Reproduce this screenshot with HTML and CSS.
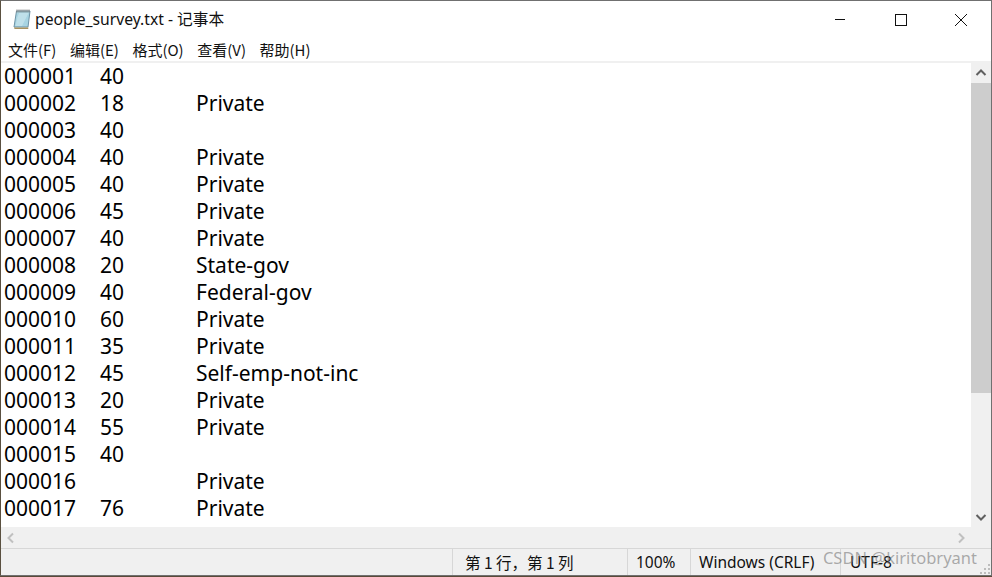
FILE: index.html
```html
<!DOCTYPE html>
<html lang="zh">
<head>
<meta charset="utf-8">
<title>people_survey.txt - 记事本</title>
<link rel="stylesheet" href="styles.css">
</head>
<body>
<div class="window">
  <header class="titlebar">
    <svg class="app-icon" width="20" height="22" viewBox="0 0 20 22">
      <path d="M4.5 3 H18 L16 19 H2 Z" fill="#a8d4e2" stroke="#6d93a6" stroke-width="1"/>
      <path d="M5.5 9 L3.5 18 H10 L16.5 5 H7 Z" fill="#c9e6ee" opacity=".7"/>
      <path d="M2 19.5 H16.5 L16.2 21 H2.6 Z" fill="#a8925f"/>
      <path d="M4.5 3 H18" stroke="#7d7d7d" stroke-width="3" stroke-dasharray="1 1"/>
    </svg>
    <span class="title">people_survey.txt - 记事本</span>
    <div class="controls">
      <svg class="ctl" width="46" height="36" viewBox="0 0 46 36"><path d="M17 18.5 H27" stroke="#111" fill="none"/></svg>
      <svg class="ctl" width="46" height="36" viewBox="0 0 46 36"><rect x="17.5" y="13.5" width="11" height="11" stroke="#111" fill="none"/></svg>
      <svg class="ctl" width="46" height="36" viewBox="0 0 46 36"><path d="M17 13 L29 25 M29 13 L17 25" stroke="#111" fill="none"/></svg>
    </div>
  </header>
  <nav class="menubar">
    <span>文件(F)</span><span>编辑(E)</span><span>格式(O)</span><span>查看(V)</span><span>帮助(H)</span>
  </nav>
  <div class="client">
    <main class="editor">
      <div class="row"><span>000001</span><span>40</span><span></span></div>
      <div class="row"><span>000002</span><span>18</span><span>Private</span></div>
      <div class="row"><span>000003</span><span>40</span><span></span></div>
      <div class="row"><span>000004</span><span>40</span><span>Private</span></div>
      <div class="row"><span>000005</span><span>40</span><span>Private</span></div>
      <div class="row"><span>000006</span><span>45</span><span>Private</span></div>
      <div class="row"><span>000007</span><span>40</span><span>Private</span></div>
      <div class="row"><span>000008</span><span>20</span><span>State-gov</span></div>
      <div class="row"><span>000009</span><span>40</span><span>Federal-gov</span></div>
      <div class="row"><span>000010</span><span>60</span><span>Private</span></div>
      <div class="row"><span>000011</span><span>35</span><span>Private</span></div>
      <div class="row"><span>000012</span><span>45</span><span>Self-emp-not-inc</span></div>
      <div class="row"><span>000013</span><span>20</span><span>Private</span></div>
      <div class="row"><span>000014</span><span>55</span><span>Private</span></div>
      <div class="row"><span>000015</span><span>40</span><span></span></div>
      <div class="row"><span>000016</span><span></span><span>Private</span></div>
      <div class="row"><span>000017</span><span>76</span><span>Private</span></div>
    </main>
    <aside class="vscroll">
      <svg width="20" height="20" viewBox="0 0 20 20"><path d="M5.5 12 L10 7.5 L14.5 12" stroke="#606060" stroke-width="2" fill="none"/></svg>
      <div class="track"><div class="thumb"></div></div>
      <svg width="20" height="20" viewBox="0 0 20 20"><path d="M5.5 8 L10 12.5 L14.5 8" stroke="#606060" stroke-width="2" fill="none"/></svg>
    </aside>
    <div class="hscroll">
      <svg width="20" height="20" viewBox="0 0 20 20"><path d="M12 5.5 L7.5 10 L12 14.5" stroke="#c0c0c0" stroke-width="2" fill="none"/></svg>
      <svg width="20" height="20" viewBox="0 0 20 20"><path d="M8 5.5 L12.5 10 L8 14.5" stroke="#c0c0c0" stroke-width="2" fill="none"/></svg>
    </div>
    <div class="corner"></div>
  </div>
  <footer class="status">
    <span class="cell pos">第 1 行，第 1 列</span>
    <span class="cell zoom">100%</span>
    <span class="cell eol">Windows (CRLF)</span>
    <span class="cell enc">UTF-8</span>
    <svg class="grip" width="12" height="12" viewBox="0 0 12 12"><path d="M9 1h2v2H9z M5 5h2v2H5z M9 5h2v2H9z M1 9h2v2H1z M5 9h2v2H5z M9 9h2v2H9z" fill="#bdbdbd"/></svg>
    <span class="watermark">CSDN @kiritobryant</span>
  </footer>
</div>
</body>
</html>
```
FILE: styles.css
```css
* { box-sizing: border-box; }
html, body { margin: 0; height: 100%; }
body {
  background: #5a4a38;
  overflow: hidden;
  font-family: "Noto Sans", "Noto Sans CJK SC", sans-serif;
  color: #000;
}
.window {
  width: 992px;
  height: 576px;
  display: flex;
  flex-direction: column;
  background: #fff;
  border: 1px solid #707070;
  border-left-color: #5a5040;
}
.titlebar {
  height: 37px;
  display: flex;
  align-items: center;
  padding: 0 0 2px 11px;
  flex: none;
}
.app-icon { flex: none; }
.title {
  margin-left: 3px;
  font-size: 15.7px;
  color: #111;
  white-space: nowrap;
}
.controls { margin-left: auto; display: flex; gap: 14px; padding-right: 7px; }
.ctl { display: block; }
.menubar {
  height: 23px;
  display: flex;
  align-items: center;
  gap: 13.5px;
  padding-left: 7px;
  font-family: "Noto Sans CJK SC", sans-serif;
  font-size: 15px;
  color: #111;
  flex: none;
}
.client {
  flex: 1;
  min-height: 0;
  display: grid;
  grid-template-columns: 1fr 20px;
  grid-template-rows: 1fr 21px;
  border-top: 2px solid #f0f0f0;
}
.editor {
  padding: 0 0 0 3px;
  overflow: hidden;
  font-size: 21px;
  line-height: 27px;
}
.row {
  display: grid;
  grid-template-columns: 96px 96px 1fr;
  height: 27px;
}
.vscroll {
  background: #f0f0f0;
  display: flex;
  flex-direction: column;
}
.vscroll svg { flex: none; }
.track { flex: 1; }
.thumb { height: 310px; background: #cdcdcd; }
.hscroll {
  background: #f0f0f0;
  display: flex;
  justify-content: space-between;
  align-items: center;
}
.corner { background: #f0f0f0; }
.status {
  position: relative;
  height: 27px;
  flex: none;
  display: flex;
  align-items: center;
  background: #f0f0f0;
  border-top: 1px solid #d7d7d7;
  font-size: 15.5px;
  color: #111;
}
.cell {
  height: 100%;
  display: flex;
  align-items: center;
  border-left: 1px solid #d7d7d7;
  white-space: nowrap;
}
.pos { margin-left: 451px; width: 175px; font-family: "Noto Sans CJK SC", sans-serif; padding-left: 12px; }
.zoom { width: 63px; padding-left: 8px; }
.eol { width: 150px; padding-left: 8px; }
.enc { padding-left: 9px; flex: 1; }
.grip { position: absolute; right: 0; bottom: 0; }
.watermark {
  position: absolute;
  right: 14px;
  top: -3px;
  font-size: 16.5px;
  color: rgba(120, 120, 120, 0.6);
  white-space: nowrap;
}
```
